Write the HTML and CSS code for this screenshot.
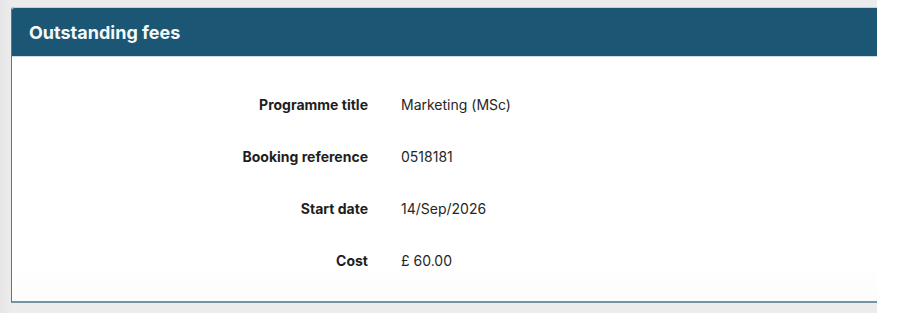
FILE: index.html
```html
<!DOCTYPE html>
<html>
<head>
  <meta charset="utf-8">
  <title>Outstanding fees</title>
  <link rel="stylesheet" href="styles.css">
</head>
<body>
  <div class="page">
    <div class="panel">
      <div class="panel-header">
        <h1>Outstanding fees</h1>
      </div>
      <div class="panel-body">
        <dl class="details">
          <dt>Programme title</dt>
          <dd>Marketing (MSc)</dd>
          <dt>Booking reference</dt>
          <dd>0518181</dd>
          <dt>Start date</dt>
          <dd>14/Sep/2026</dd>
          <dt>Cost</dt>
          <dd>&pound; 60.00</dd>
        </dl>
      </div>
    </div>
  </div>
</body>
</html>
```

FILE: styles.css
```css
body {
  margin: 0;
  background: white;
  font-family: Inter, 'Noto Sans', sans-serif;
  color: #222;
}

.page {
  width: 877px;
  height: 313px;
  overflow: hidden;
  background: linear-gradient(to right, #e6e6e6 0, #ececec 11px);
  padding: 7px 0 0 11px;
  box-sizing: border-box;
}

.panel {
  width: 900px;
  background: white;
  border-left: 1px solid #5f7684;
  border-bottom: 2px solid #7493a3;
  border-radius: 3px 0 0 0;
}

.panel-header {
  background: #1b5774;
  border-top: 1px solid #b9d3e0;
  border-bottom: 1px solid #c9dde7;
  border-radius: 3px 0 0 0;
  height: 48px;
  display: flex;
  align-items: center;
  padding-left: 17px;
}

.panel-header h1 {
  margin: 0;
  font-size: 18px;
  font-weight: 700;
  color: #f4f8fa;
}

.panel-body {
  padding: 21px 0 15px;
  background: linear-gradient(to bottom, white 85%, #fcfcfc 100%);
}

.details {
  margin: 0;
  display: grid;
  grid-template-columns: 356px 1fr;
  grid-auto-rows: 52px;
  column-gap: 33px;
  align-items: center;
  font-size: 14px;
}

.details dt {
  text-align: right;
  font-weight: 700;
  color: #1e1e1e;
}

.details dd {
  margin: 0;
  color: #262626;
}
```
